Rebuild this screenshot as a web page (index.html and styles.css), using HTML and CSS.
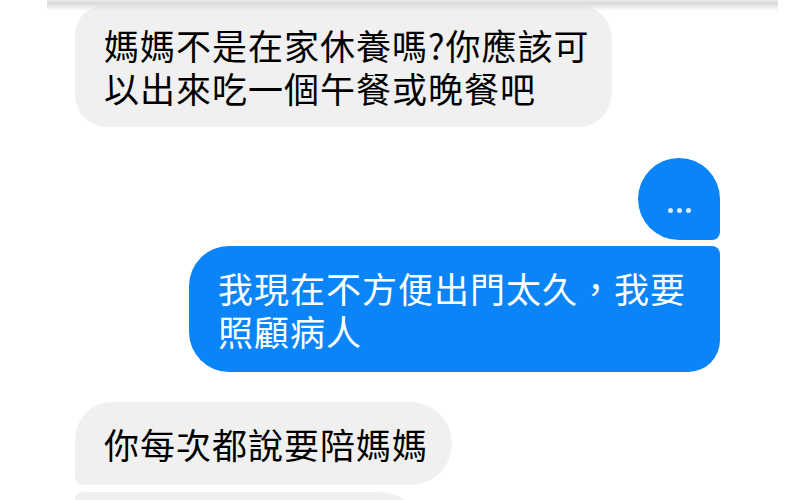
FILE: index.html
```html
<!DOCTYPE html>
<html>
<head>
    <title>Chat</title>
    <meta name="viewport" content="width=device-width, initial-scale=1.0">
    <link rel="stylesheet" href="styles.css">
</head>
<body>
    <div class="top-shadow"></div>
    <div class="chat">
        <div class="msg them first last">媽媽不是在家休養嗎?你應該可<br>以出來吃一個午餐或晚餐吧</div>
        <div class="typing">
            <span class="dot"></span>
            <span class="dot"></span>
            <span class="dot"></span>
        </div>
        <div class="msg me">我現在不方便出門太久，我要<br>照顧病人</div>
        <div class="msg them first">你每次都說要陪媽媽</div>
        <div class="msg them middle next"></div>
    </div>
</body>
</html>
```

FILE: styles.css
```css
body {
    margin: 0;
    background: #ffffff;
    font-family: "Noto Sans CJK TC", "Noto Sans", sans-serif;
    overflow: hidden;
    height: 500px;
}
.top-shadow {
    position: absolute;
    top: 0;
    left: 47px;
    width: 731px;
    height: 11px;
    background: linear-gradient(to bottom, #ececec 0, #d9d9d9 3px, rgba(255, 255, 255, 0) 11px);
    z-index: 2;
}
.chat {
    display: flex;
    flex-direction: column;
    align-items: flex-start;
    padding: 5px 80px 0 75px;
}
.msg {
    font-size: 35px;
    line-height: 43px;
    letter-spacing: 1px;
    padding: 18px 29px;
    border-radius: 34px;
}
.them {
    background: #f0f0f0;
    color: #000000;
}
.them.first {
    margin-top: 30px;
    padding: 20px 24px 20px 29px;
    border-radius: 38px 42px 42px 8px;
}
.them.first.last {
    margin-top: 0;
    padding: 18px 22px 18px 29px;
    border-radius: 30px 34px 34px 32px;
}
.them.next {
    margin-top: 7px;
    width: 345px;
    height: 80px;
    padding: 0;
    border-radius: 8px 40px 40px 8px;
}
.typing {
    align-self: flex-end;
    margin-top: 31px;
    width: 82px;
    height: 82px;
    background: #0a84f6;
    border-radius: 41px 41px 8px 41px;
    display: flex;
    justify-content: center;
    align-items: flex-end;
    gap: 4px;
    padding-bottom: 27px;
    box-sizing: border-box;
}
.dot {
    width: 5px;
    height: 5px;
    border-radius: 50%;
    background: #dcecff;
}
.me {
    align-self: flex-end;
    margin-top: 6px;
    background: #0a84f6;
    color: #ffffff;
    padding: 20px 34px 20px 29px;
    border-radius: 40px 8px 32px 40px;
}
```
